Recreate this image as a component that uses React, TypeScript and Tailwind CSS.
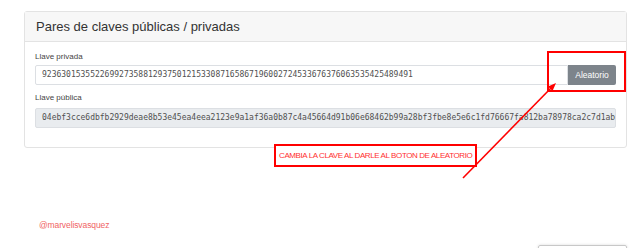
import React from "react";

const PRIVATE_KEY =
  "92363015355226992735881293750121533087165867196002724533676376063535425489491";
const PUBLIC_KEY =
  "04ebf3cce6dbfb2929deae8b53e45ea4eea2123e9a1af36a0b87c4a45664d91b06e68462b99a28bf3fbe8e5e6c1fd76667fa812ba78978ca2c7d1ab4e5f6a7b8c9d0";

export default function App() {
  return (
    <div className="relative w-[640px] h-[248px] overflow-hidden bg-white font-['Liberation_Sans',Arial,sans-serif]">
      {/* Key pair card */}
      <div className="ml-[24px] mt-[11px] w-[603px] border border-[#e3e3e3] rounded-[3px]">
        <div className="h-[30px] flex items-center px-[11px] bg-[#f7f7f7] border-b border-[#e3e3e3]">
          <h2 className="text-[13px] text-[#333] leading-none">Pares de claves públicas / privadas</h2>
        </div>
        <div className="px-[10px] pt-[10px] pb-[19px]">
          <label className="block text-[8px] leading-[10px] text-[#444]">Llave privada</label>
          <div className="mt-[3px] flex h-[20px]">
            <div className="flex-1 flex items-center px-[6px] border border-[#dcdfe3] rounded-l-[2px] bg-white font-['DejaVu_Sans_Mono',monospace] text-[8px] text-[#505050] overflow-hidden whitespace-nowrap">
              {PRIVATE_KEY}
            </div>
            <button className="w-[48px] bg-[#7d848b] text-white text-[8.5px] rounded-r-[2px]">Aleatorio</button>
          </div>
          <label className="block mt-[8px] text-[8px] leading-[10px] text-[#444]">Llave pública</label>
          <div className="mt-[5px] h-[20px] flex items-center px-[6px] border border-[#dcdfe3] rounded-[2px] bg-[#e9ecef] font-['DejaVu_Sans_Mono',monospace] text-[8px] text-[#505050] overflow-hidden whitespace-nowrap">
            {PUBLIC_KEY}
          </div>
        </div>
      </div>

      {/* Footer */}
      <p className="mt-[72px] pl-[39px] text-[8.5px] leading-[11px] tracking-[-0.1px] text-[#f06464]">@marvelisvasquez</p>
      <div className="mt-[14px] ml-auto mr-[13px] w-[89px] h-[10px] border border-[#c8c8c8] rounded-t-[2px] shadow-[0_0_3px_rgba(0,0,0,0.15)]" />

      {/* Annotations drawn over the screenshot */}
      <div className="absolute left-[547px] top-[51px] w-[79px] h-[41px] border-2 border-[#ff0000]" />
      <div className="absolute left-[274px] top-[144px] w-[203px] h-[23px] border-2 border-[#ff0000] bg-white flex items-center pl-[3px]">
        <span className="text-[8px] tracking-[-0.4px] text-[#ff3030] whitespace-nowrap">
          CAMBIA LA CLAVE AL DARLE AL BOTON DE ALEATORIO
        </span>
      </div>
      <svg className="absolute left-0 top-0" width="640" height="248">
        <line x1="463" y1="178" x2="552" y2="87" stroke="#ff0000" strokeWidth="1.6" />
        <polygon points="556,83 552.5,91 548,86.5" fill="#ff0000" />
      </svg>
    </div>
  );
}
